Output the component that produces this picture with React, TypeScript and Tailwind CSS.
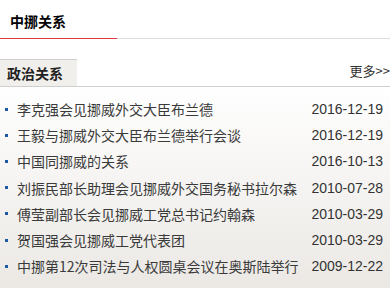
const items = [
  { title: '李克强会见挪威外交大臣布兰德', date: '2016-12-19' },
  { title: '王毅与挪威外交大臣布兰德举行会谈', date: '2016-12-19' },
  { title: '中国同挪威的关系', date: '2016-10-13' },
  { title: '刘振民部长助理会见挪威外交国务秘书拉尔森', date: '2010-07-28' },
  { title: '傅莹副部长会见挪威工党总书记约翰森', date: '2010-03-29' },
  { title: '贺国强会见挪威工党代表团', date: '2010-03-29' },
  { title: '中挪第12次司法与人权圆桌会议在奥斯陆举行', date: '2009-12-22' },
]

export default function App() {
  return (
    <div className="h-[288px] w-[390px] overflow-hidden bg-white text-[#333] font-['SimSun','Noto_Sans_CJK_SC',sans-serif]">
      <div className="flex h-[38px] items-center pl-[10px] pt-[4px] text-[14px] font-bold text-black">
        中挪关系
      </div>
      <div className="flex h-px">
        <div className="w-[117px] bg-[#e0383c]" />
        <div className="flex-1 bg-[#dcdcdc]" />
      </div>
      <div className="mt-[20px] flex items-end justify-between border-b border-[#cfcfcf]">
        <div className="flex h-[27px] w-[77px] items-center border-t border-[#cfcfcf] bg-[#f1efeb] pl-[7px] text-[14px] font-bold text-[#222]">
          政治关系
        </div>
        <div className="mb-[6px] whitespace-nowrap text-[13px] text-[#333]">更多&gt;&gt;</div>
      </div>
      <ul className="h-[202px] bg-gradient-to-b from-white to-[#ebe8e4] pt-[9px]">
        {items.map((it) => (
          <li key={it.title} className="flex h-[26.2px] items-center pr-[7px]">
            <span className="ml-[5px] mr-[9px] h-[3px] w-[3px] bg-[#1d58a6]" />
            <span className="flex-1 whitespace-nowrap text-[14px] leading-none text-[#3a3a3a]">{it.title}</span>
            <span className="text-[14px] leading-none font-['Liberation_Sans',Arial,sans-serif] text-[#333]">{it.date}</span>
          </li>
        ))}
      </ul>
    </div>
  )
}
